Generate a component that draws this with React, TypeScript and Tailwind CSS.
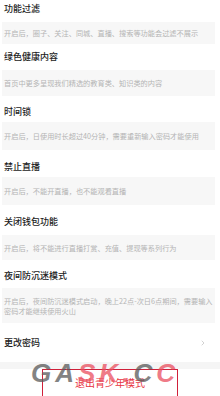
import { ChevronRight } from "lucide-react";

type Item = {
  title: string;
  desc: string;
  titleH: string;
  descH: string;
};

const items: Item[] = [
  {
    title: "功能过滤",
    desc: "开启后，圈子、关注、同城、直播、搜索等功能会过滤不展示",
    titleH: "h-[22px] pb-[5px]",
    descH: "h-[22px]",
  },
  {
    title: "绿色健康内容",
    desc: "首页中更多呈现我们精选的教育类、知识类的内容",
    titleH: "h-[26px]",
    descH: "h-[26px]",
  },
  {
    title: "时间锁",
    desc: "开启后，日使用时长超过40分钟，需要重新输入密码才能使用",
    titleH: "h-[26px] pt-[6px]",
    descH: "h-[28px]",
  },
  {
    title: "禁止直播",
    desc: "开启后，不能开直播，也不能观看直播",
    titleH: "h-[27px] pt-[6px]",
    descH: "h-[28px]",
  },
  {
    title: "关闭钱包功能",
    desc: "开启后，将不能进行直播打赏、充值、提现等系列行为",
    titleH: "h-[30px] pt-[4px]",
    descH: "h-[25px]",
  },
  {
    title: "夜间防沉迷模式",
    desc: "开启后，夜间防沉迷模式启动，晚上22点-次日6点期间，需要输入密码才能继续使用火山",
    titleH: "h-[28px] pt-[3px]",
    descH: "h-[35px]",
  },
];

export default function App() {
  return (
    <div
      className="relative w-[220px] h-[396px] overflow-hidden bg-white"
      style={{ fontFamily: '"Noto Sans CJK SC", "Noto Sans", sans-serif' }}
    >
      {items.map((it) => (
        <div key={it.title}>
          <div className={`flex items-center px-[4px] ${it.titleH}`}>
            <span className="text-[9px] leading-[12px] font-medium text-[#222]">{it.title}</span>
          </div>
          <div className={`flex items-center ml-[2px] mr-[5px] px-[2px] bg-[#f7f7f7] ${it.descH}`}>
            <p className="text-[7.2px] leading-[10px] text-[#b4b4b4]">{it.desc}</p>
          </div>
        </div>
      ))}

      <div className="flex h-[39px] items-center justify-between pl-[4px] pr-[13px]">
        <span className="text-[9px] leading-[12px] font-medium text-[#222]">更改密码</span>
        <ChevronRight className="h-[8px] w-[8px] text-[#bbb]" strokeWidth={2} />
      </div>
      <div className="h-[7px] bg-[#f5f5f5]" />

      <div className="relative mx-auto flex h-[27px] w-[136px] items-start justify-center border-[1.5px] border-b-0 border-[#d0203a] pt-[6px]">
        <span className="text-[10px] leading-[13px] text-[#e8333f]">退出青少年模式</span>
      </div>

      <div
        className="pointer-events-none absolute left-[31px] top-[360px] flex items-baseline text-[26px] font-black italic leading-[26px] tracking-[4px] opacity-75"
        style={{ fontFamily: '"Liberation Sans", sans-serif' }}
      >
        <span className="text-[#5a5a5a]">G</span>
        <span className="text-[#5a5a5a]">A</span>
        <span className="text-[#ea4f5f]">S</span>
        <span className="text-[#ea4f5f]">K</span>
        <span className="text-[#ea4f5f]">.</span>
        <span className="text-[#5a5a5a]">C</span>
        <span className="text-[#ea4f5f]">C</span>
      </div>
    </div>
  );
}
